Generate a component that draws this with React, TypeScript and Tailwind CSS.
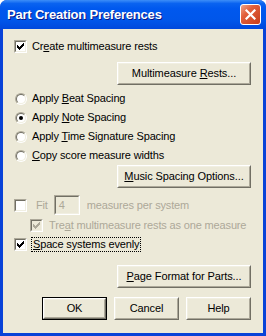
import React from "react";

const font = { fontFamily: '"Liberation Sans", Arial, sans-serif' };

const CheckGlyph = ({ color = "#000" }: { color?: string }) => (
  <svg width="7" height="7" viewBox="0 0 7 7" shapeRendering="crispEdges">
    <path
      fill={color}
      d="M6 0h1v1h-1z M5 1h2v1h-2z M0 2h1v1h-1z M4 2h3v1h-3z M0 3h2v1h-2z M3 3h3v1h-3z M0 4h5v1h-5z M1 5h3v1h-3z M2 6h1v1h-1z"
    />
  </svg>
);

const CheckBox = ({ checked, disabled }: { checked?: boolean; disabled?: boolean }) => (
  <div className="h-[13px] w-[13px] shrink-0 border border-t-[#aca899] border-l-[#aca899] border-r-white border-b-white">
    <div
      className={`flex h-full w-full items-center justify-center border border-t-[#716f64] border-l-[#716f64] border-r-[#f1efe2] border-b-[#f1efe2] ${
        disabled ? "bg-[#ece9d8]" : "bg-white"
      }`}
    >
      {checked && <CheckGlyph color={disabled ? "#aca899" : "#000"} />}
    </div>
  </div>
);

const Radio = ({ checked }: { checked?: boolean }) => (
  <div className="h-[12px] w-[12px] shrink-0 rounded-full border border-t-[#aca899] border-l-[#aca899] border-r-white border-b-white">
    <div className="flex h-full w-full items-center justify-center rounded-full border border-t-[#716f64] border-l-[#716f64] border-r-[#f1efe2] border-b-[#f1efe2] bg-white">
      {checked && <div className="h-[4px] w-[4px] rounded-full bg-black" />}
    </div>
  </div>
);

const Button = ({
  children,
  className = "",
  isDefault,
}: {
  children: React.ReactNode;
  className?: string;
  isDefault?: boolean;
}) => (
  <div className={`${className} h-[23px] ${isDefault ? "border border-black" : ""}`}>
    <div className="h-full w-full border border-t-white border-l-white border-r-[#716f64] border-b-[#716f64]">
      <div className="flex h-full w-full items-center justify-center whitespace-nowrap border border-t-[#f1efe2] border-l-[#f1efe2] border-r-[#aca899] border-b-[#aca899] bg-[#ece9d8] text-[11px] tracking-[-0.1px] text-black">
        {children}
      </div>
    </div>
  </div>
);

const label = "whitespace-nowrap text-[11px] leading-[13px] tracking-[-0.15px]";

const CheckRow = ({ checked, children }: { checked?: boolean; children: React.ReactNode }) => (
  <div className="flex h-[13px] items-center">
    <CheckBox checked={checked} />
    <span className={`ml-[5px] ${label}`}>{children}</span>
  </div>
);

const RadioRow = ({ checked, children }: { checked?: boolean; children: React.ReactNode }) => (
  <div className="flex h-[13px] items-center pl-[1px]">
    <Radio checked={checked} />
    <span className={`ml-[5px] ${label}`}>{children}</span>
  </div>
);

const CloseButton = () => (
  <div className="flex h-[21px] w-[21px] items-center justify-center rounded-[3px] border border-white bg-[linear-gradient(135deg,#f0a68c_0%,#e2603c_35%,#c63c1a_100%)]">
    <svg width="11" height="11" viewBox="0 0 11 11">
      <path d="M1.5 1.5 L9.5 9.5 M9.5 1.5 L1.5 9.5" stroke="white" strokeWidth="2.2" strokeLinecap="square" />
    </svg>
  </div>
);

export default function App() {
  return (
    <div
      style={font}
      className="flex h-[336px] w-[266px] flex-col overflow-hidden rounded-t-[7px] bg-[#0842d8]"
    >
      <div className="flex h-[29px] shrink-0 items-center justify-between bg-[linear-gradient(180deg,#3d8ef8_0%,#0a63f0_12%,#0058ee_30%,#0056ea_70%,#0048dc_100%)] pl-[7px] pr-[5px]">
        <span className="text-[13px] font-bold tracking-[-0.2px] text-white [text-shadow:1px_1px_0_#0a1883]">
          Part Creation Preferences
        </span>
        <CloseButton />
      </div>
      <div className="mx-[3px] mb-[3px] flex flex-1 flex-col bg-[#ece9d8] pl-[11px] pr-[12px] pt-[11px] text-black">
        <CheckRow checked>
          Cr<u>e</u>ate multimeasure rests
        </CheckRow>

        <div className="mt-[9px] flex justify-end">
          <Button className="w-[134px]">
            Multimeasure&nbsp;<u>R</u>ests...
          </Button>
        </div>

        <div className="mt-[7px] flex flex-col gap-[6px]">
          <RadioRow>
            Apply <u>B</u>eat Spacing
          </RadioRow>
          <RadioRow checked>
            Apply <u>N</u>ote Spacing
          </RadioRow>
          <RadioRow>
            Apply <u>T</u>ime Signature Spacing
          </RadioRow>
          <RadioRow>
            <u>C</u>opy score measure widths
          </RadioRow>
        </div>

        <div className="mt-[3px] flex justify-end">
          <Button className="w-[134px]">
            <u>M</u>usic Spacing Options...
          </Button>
        </div>

        <div className="mt-[7px] flex h-[20px] items-center">
          <CheckBox />
          <span className={`ml-[9px] ${label} text-[#aca899]`}>Fit</span>
          <div className="ml-[6px] h-[20px] w-[26px] border border-t-[#aca899] border-l-[#aca899] border-r-white border-b-white">
            <div className="flex h-full w-full items-center border border-t-[#716f64] border-l-[#716f64] border-r-[#f1efe2] border-b-[#f1efe2] bg-[#ece9d8] pl-[3px] text-[11px] text-[#aca899]">
              4
            </div>
          </div>
          <span className={`ml-[7px] ${label} text-[#aca899]`}>measures per system</span>
        </div>

        <div className="mt-[4px] flex h-[13px] items-center pl-[16px]">
          <CheckBox checked disabled />
          <span className={`ml-[6px] ${label} text-[#aca899]`}>
            Tre<u>a</u>t multimeasure rests as one measure
          </span>
        </div>

        <div className="mt-[6px] flex h-[13px] items-center">
          <CheckBox checked />
          <span className={`ml-[4px] border border-dotted border-black px-[1px] ${label}`}>
            <u>S</u>pace systems evenly
          </span>
        </div>

        <div className="mt-[14px] flex justify-end">
          <Button className="w-[134px]">
            <u>P</u>age Format for Parts...
          </Button>
        </div>

        <div className="mt-[9px] flex justify-end gap-[7px]">
          <Button className="w-[65px]" isDefault>
            OK
          </Button>
          <Button className="w-[65px]">Cancel</Button>
          <Button className="w-[65px]">Help</Button>
        </div>
      </div>
    </div>
  );
}
